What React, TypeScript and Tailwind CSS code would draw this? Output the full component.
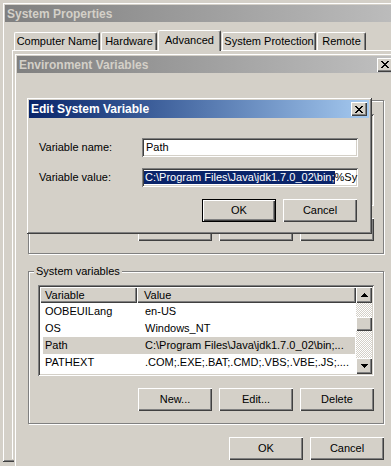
import React from 'react';

// classic 3D bevels
const frame =
  'shadow-[inset_1px_1px_0_#d4d0c8,inset_-1px_-1px_0_#404040,inset_2px_2px_0_#ffffff,inset_-2px_-2px_0_#808080]';
const raised = 'shadow-[inset_1px_1px_0_#ffffff,inset_-1px_-1px_0_#404040,inset_-2px_-2px_0_#808080]';
const sunken =
  'shadow-[inset_1px_1px_0_#808080,inset_-1px_-1px_0_#ffffff,inset_2px_2px_0_#404040,inset_-2px_-2px_0_#d4d0c8]';

const CloseButton = () => (
  <div className={`flex h-[14px] w-[16px] items-center justify-center bg-[#d4d0c8] ${raised}`}>
    <svg width="8" height="7" viewBox="0 0 8 7" shapeRendering="crispEdges">
      <path
        d="M0 0h2v1H0zM6 0h2v1H6zM1 1h2v1H1zM5 1h2v1H5zM2 2h4v1H2zM3 3h2v1H3zM2 4h4v1H2zM1 5h2v1H1zM5 5h2v1H5zM0 6h2v1H0zM6 6h2v1H6z"
        fill="#000"
      />
    </svg>
  </div>
);

const Arrow = ({ down }: { down?: boolean }) => (
  <svg width="7" height="4" viewBox="0 0 7 4" shapeRendering="crispEdges">
    <path
      d={down ? 'M0 0h7v1H0zM1 1h5v1H1zM2 2h3v1H2zM3 3h1v1H3z' : 'M3 0h1v1H3zM2 1h3v1H2zM1 2h5v1H1zM0 3h7v1H0z'}
      fill="#000"
    />
  </svg>
);

const Button = ({ label, isDefault }: { label: string; isDefault?: boolean }) =>
  isDefault ? (
    <div className="h-[23px] w-[74px] border border-black">
      <div className={`flex h-full w-full items-center justify-center bg-[#d4d0c8] ${raised}`}>{label}</div>
    </div>
  ) : (
    <div className={`flex h-[23px] w-[74px] items-center justify-center bg-[#d4d0c8] ${raised}`}>{label}</div>
  );

const tabs = [
  { label: 'Computer Name', cls: 'w-[86px] h-[18px]' },
  { label: 'Hardware', cls: 'w-[56px] h-[18px]' },
  { label: 'Advanced', cls: 'w-[63px] h-[21px] -mb-px relative z-10 pb-px', active: true },
  { label: 'System Protection', cls: 'w-[94px] h-[18px]' },
  { label: 'Remote', cls: 'w-[49px] h-[18px]' },
];

const rows = [
  { name: 'OOBEUILang', value: 'en-US' },
  { name: 'OS', value: 'Windows_NT' },
  { name: 'Path', value: 'C:\\Program Files\\Java\\jdk1.7.0_02\\bin;...', selected: true },
  { name: 'PATHEXT', value: '.COM;.EXE;.BAT;.CMD;.VBS;.VBE;.JS;....' },
];

export default function App() {
  return (
    <div className="relative h-[466px] w-[391px] overflow-hidden bg-[#d4d0c8] font-['Liberation_Sans',Arial,sans-serif] text-[11px] leading-none text-black">
      {/* System Properties */}
      <div className={`ml-[2px] mt-[2px] flex h-[460px] w-[420px] flex-col p-[3px] ${frame}`}>
        <div className="flex h-[17px] items-center bg-gradient-to-r from-[#808080] to-[#c0c0c0] pl-[2px] text-[12px] font-bold text-[#d4d0c8]">
          System Properties
        </div>
        <div className="ml-[9px] mt-[8px] flex h-[20px] items-end gap-px">
          {tabs.map((t) => (
            <div
              key={t.label}
              className={`flex items-center justify-center rounded-t-[2px] border-l border-r border-t border-white border-r-[#404040] bg-[#d4d0c8] shadow-[inset_-1px_0_0_#808080] ${t.cls}`}
            >
              {t.label}
            </div>
          ))}
        </div>
        <div className="ml-[7px] flex-1 border-l border-t border-white" />
      </div>

      {/* Environment Variables */}
      <div className={`absolute left-[14px] top-[53px] flex h-[420px] w-[384px] flex-col bg-[#d4d0c8] p-[3px] ${frame}`}>
        <div className="flex h-[17px] items-center justify-between bg-gradient-to-r from-[#808080] to-[#c0c0c0] pl-[2px] pr-[2px] text-[12px] font-bold text-[#d4d0c8]">
          <span>Environment Variables</span>
          <CloseButton />
        </div>
        <div className="flex flex-col pl-[11px] pr-[11px]">
          {/* User variables, mostly hidden */}
          <div className="mt-[27px] border border-[#808080] px-[9px] pb-[12px] pt-[13px] shadow-[inset_1px_1px_0_#ffffff,1px_1px_0_#ffffff]">
            <div className={`h-[92px] bg-white ${sunken}`} />
            <div className="mt-[12px] flex justify-end gap-[7px]">
              <Button label="New..." />
              <Button label="Edit..." />
              <Button label="Delete" />
            </div>
          </div>

          {/* System variables */}
          <div className="mt-[17px] border border-[#808080] px-[9px] pb-[12px] shadow-[inset_1px_1px_0_#ffffff,1px_1px_0_#ffffff]">
            <span className="-ml-[4px] -mt-[7px] block w-fit bg-[#d4d0c8] px-[2px] leading-[13px]">System variables</span>
            <div className={`mt-[7px] flex h-[91px] bg-white p-[2px] ${sunken}`}>
              <div className="flex flex-1 flex-col overflow-hidden">
                <div className="flex h-[16px] shrink-0">
                  <div className={`flex w-[97px] items-center bg-[#d4d0c8] pl-[5px] ${raised}`}>Variable</div>
                  <div className={`flex flex-1 items-center bg-[#d4d0c8] pl-[7px] ${raised}`}>Value</div>
                </div>
                {rows.map((r) => (
                  <div
                    key={r.name}
                    className={`ml-[3px] flex h-[17px] w-[312px] shrink-0 items-center whitespace-nowrap ${r.selected ? 'bg-[#d4d0c8]' : ''}`}
                  >
                    <span className="w-[94px] pl-[2px]">{r.name}</span>
                    <span className="pl-[8px]">{r.value}</span>
                  </div>
                ))}
              </div>
              <div className="flex w-[16px] flex-col">
                <div className={`flex h-[16px] items-center justify-center bg-[#d4d0c8] ${raised}`}>
                  <Arrow />
                </div>
                <div className="flex-1 bg-[image:repeating-conic-gradient(#ffffff_0%_25%,#d4d0c8_0%_50%)] bg-[length:2px_2px]">
                  <div className={`mt-[14px] h-[14px] bg-[#d4d0c8] ${raised}`} />
                </div>
                <div className={`flex h-[16px] items-center justify-center bg-[#d4d0c8] ${raised}`}>
                  <Arrow down />
                </div>
              </div>
            </div>
            <div className="mt-[12px] flex justify-end gap-[7px]">
              <Button label="New..." />
              <Button label="Edit..." />
              <Button label="Delete" />
            </div>
          </div>

          <div className="mt-[13px] flex justify-end gap-[7px]">
            <Button label="OK" />
            <Button label="Cancel" />
          </div>
        </div>
      </div>

      {/* Edit System Variable */}
      <div className={`absolute left-[26px] top-[97px] flex h-[137px] w-[346px] flex-col bg-[#d4d0c8] p-[3px] ${frame}`}>
        <div className="flex h-[18px] items-center justify-between bg-gradient-to-r from-[#0a246a] to-[#a6caf0] pl-[2px] pr-[2px] text-[12px] font-bold text-white">
          <span>Edit System Variable</span>
          <CloseButton />
        </div>
        <div className="flex flex-col pl-[10px] pr-[11px]">
          <div className="mt-[20px] flex items-center">
            <span className="w-[103px]">Variable name:</span>
            <div className={`flex h-[19px] flex-1 items-center bg-white pl-[4px] ${sunken}`}>Path</div>
          </div>
          <div className="mt-[11px] flex items-center">
            <span className="w-[103px]">Variable value:</span>
            <div className={`flex h-[19px] flex-1 items-center overflow-hidden whitespace-nowrap bg-white pl-[2px] pr-[2px] ${sunken}`}>
              <span className="bg-[#0a246a] pl-[1px] leading-[13px] text-white">{'C:\\Program Files\\Java\\jdk1.7.0_02\\bin;'}</span>
              <span className="leading-[13px]">%Sy</span>
            </div>
          </div>
          <div className="mr-[1px] mt-[12px] flex justify-end gap-[7px]">
            <Button label="OK" isDefault />
            <Button label="Cancel" />
          </div>
        </div>
      </div>
    </div>
  );
}
